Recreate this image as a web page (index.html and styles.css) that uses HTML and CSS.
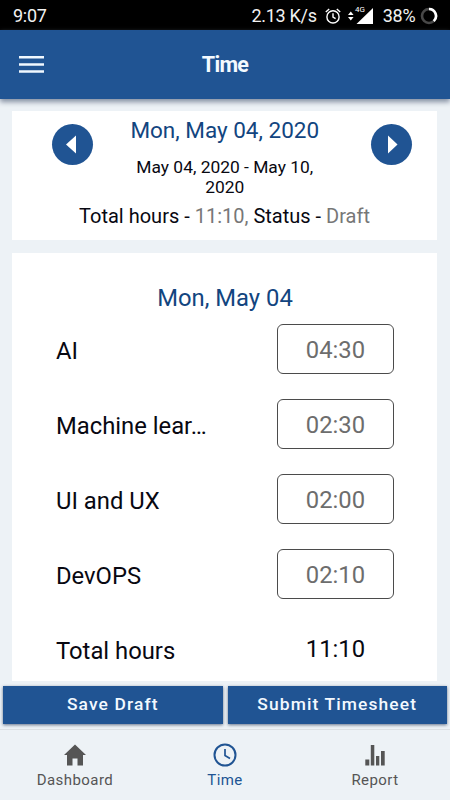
FILE: index.html
```html
<!DOCTYPE html>
<html lang="en">
<head>
<meta charset="utf-8">
<title>Time</title>
<link rel="stylesheet" href="styles.css">
</head>
<body>
<div class="status">
  <span class="clock">9:07</span>
  <span class="speed">2.13 K/s</span>
  <svg class="alarm" width="16" height="16" viewBox="0 0 16 16" fill="none" stroke="#fff" stroke-width="1.4"><circle cx="8" cy="8.900" r="6.100"/><path d="M8 5.200v4l2.600 1.500M.8 4 4.200 1M15.200 4 11.800 1"/></svg>
  <svg class="signal" width="26" height="20" viewBox="0 0 26 20" fill="#fff"><path d="M0 11l2.800-3.500L5.600 11zM0 13l2.800 3.500L5.600 13zM25 4v16H8.500z"/><text x="7" y="8" font-size="8">4G</text></svg>
  <span class="percent">38%</span>
  <svg class="ring" width="18" height="18" viewBox="0 0 18 18" fill="none" stroke-width="2.600"><circle cx="9" cy="9" r="7" stroke="#484848"/><path d="M9 2a7 7 0 0 1 4.800 12.100" stroke="#fff"/></svg>
</div>
<header class="bar">
  <svg class="menu" width="25" height="17" viewBox="0 0 25 17" fill="#f0f8ff"><path d="M0 0h25v2.600H0zM0 7.200h25v2.600H0zM0 14.200h25v2.600H0z"/></svg>
  <h1>Time</h1>
</header>
<main>
  <section class="card summary">
    <div class="week">
      <button class="arrow"><svg width="41" height="41" viewBox="0 0 41 41"><path d="M24 11.500v18L14 20.500z"/></svg></button>
      <div class="dates">
        <h2>Mon, May 04, 2020</h2>
        <p class="range">May 04, 2020 - May 10, 2020</p>
      </div>
      <button class="arrow"><svg width="41" height="41" viewBox="0 0 41 41"><path d="M17 11.500v18l9.500-9z"/></svg></button>
    </div>
    <p class="totals">Total hours - <span>11:10,</span> Status - <span>Draft</span></p>
  </section>
  <section class="card sheet">
    <h2>Mon, May 04</h2>
    <div class="row"><span class="name">AI</span><span class="hours box">04:30</span></div>
    <div class="row"><span class="name">Machine lear…</span><span class="hours box">02:30</span></div>
    <div class="row"><span class="name">UI and UX</span><span class="hours box">02:00</span></div>
    <div class="row"><span class="name">DevOPS</span><span class="hours box">02:10</span></div>
    <div class="row"><span class="name">Total hours</span><span class="hours">11:10</span></div>
  </section>
</main>
<div class="actions">
  <button>Save Draft</button>
  <button>Submit Timesheet</button>
</div>
<nav>
  <a><svg width="24" height="24" viewBox="0 0 24 24" fill="#555"><path d="M12 1.500 23 12h-3v10.500h-5.500v-7h-5v7H4V12H1z"/></svg>Dashboard</a>
  <a class="active"><svg width="24" height="24" viewBox="0 0 24 24" fill="none" stroke="#205493" stroke-width="2"><circle cx="12" cy="12" r="10.500"/><path d="M12 6v6.500l5 3" stroke-width="1.700"/></svg>Time</a>
  <a><svg width="24" height="24" viewBox="0 0 24 24" fill="#555"><path d="M2.300 16.500h4v6h-4zM7.800 2h3.500v20.500H7.800zM13 13h3.300v9.500H13zM18 8h3.700v14.500H18z"/></svg>Report</a>
</nav>
</body>
</html>
```

FILE: styles.css
```css
* { box-sizing: border-box; margin: 0; padding: 0; }
body { width: 450px; height: 800px; overflow: hidden; display: flex; flex-direction: column; background: #edf2f6; color: #080811; font-family: Roboto, sans-serif; }
h1, h2 { font-weight: 400; }
button { border: 0; font-family: inherit; }
.status { height: 30px; flex: none; display: flex; align-items: center; background: #000; color: #f2f2f2; font-size: 18px; padding: 1px 12px 0 13px; }
.clock { flex: 1; letter-spacing: -.3px; }
.speed { letter-spacing: -.3px; }
.alarm { margin-left: 8.500px; }
.signal { margin: -3px 0 0 6.500px; }
.percent { margin-left: 9px; letter-spacing: -.2px; }
.ring { margin-left: 4.500px; }
.bar { height: 69px; flex: none; display: grid; grid-template-columns: 48px 1fr 48px; align-items: center; padding: 0 19px; background: #205493; color: #f4faff; box-shadow: 0 3px 5px #8590a2; }
.bar h1 { font-size: 21.500px; font-weight: 700; text-align: center; letter-spacing: -.7px; }
main { flex: none; height: 582px; padding: 12px 13px 0 12px; }
.card { background: #fff; }
.summary { height: 129px; margin-bottom: 13px; }
.week { display: flex; justify-content: space-between; padding: 6px 25.500px 0 40px; height: 92px; }
.arrow { width: 41px; height: 41px; margin-top: 7px; border-radius: 50%; background: #205493; }
.arrow path { fill: #fff; }
.dates { width: 230px; margin-right: 14px; text-align: center; }
h2 { color: #12457f; font-size: 22.500px; line-height: 27px; text-align: center; }
.range { width: 190px; margin: 13px auto 0; font-size: 17.400px; line-height: 20px; }
.totals { text-align: center; font-size: 20px; line-height: 26px; }
.totals span { color: #777; }
.sheet { height: 428px; padding: 32px 43px 0 44px; }
.sheet h2 { margin-bottom: 12px; font-size: 23.800px; }
.row { display: flex; justify-content: space-between; height: 75px; }
.name { margin-top: 13px; font-size: 23.800px; line-height: 28px; white-space: nowrap; }
.hours { width: 117px; height: 50px; font-size: 23.800px; line-height: 51px; text-align: center; }
.box { color: #6d6d6d; border: 1px solid #4b4b4b; border-radius: 6px; line-height: 50px; }
.actions { height: 48px; flex: none; display: flex; gap: 5px; padding: 5px 3px; }
.actions button { flex: 1; height: 38px; padding-bottom: 2px; background: #205493; color: #f3f9ff; font-size: 17.400px; font-weight: 500; letter-spacing: 1.130px; box-shadow: 0 1px 3px #65738a; }
nav { flex: 1; display: flex; border-top: 1px solid #dce0e4; }
nav a { flex: 1; display: flex; flex-direction: column; align-items: center; gap: 4px; padding-top: 13px; color: #555; font-size: 15px; line-height: 18px; letter-spacing: .45px; }
nav .active { color: #205493; }
```
